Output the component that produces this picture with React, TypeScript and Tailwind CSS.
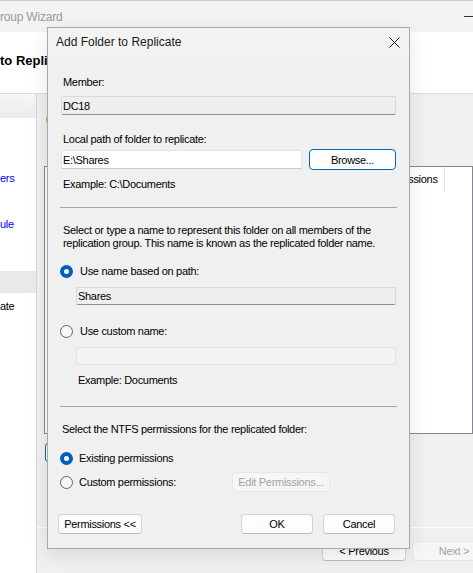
import type { ReactNode } from "react";

const Radio = ({ checked }: { checked?: boolean }) =>
  checked ? (
    <span className="flex h-[13px] w-[13px] shrink-0 items-center justify-center rounded-full bg-[#005fb8]">
      <span className="h-[5px] w-[5px] rounded-full bg-white" />
    </span>
  ) : (
    <span className="h-[13px] w-[13px] shrink-0 rounded-full border border-[#636363] bg-[#f7f7f7]" />
  );

const tones = {
  normal: "border-[#d3d3d3] border-b-[#bababa] bg-[#fdfdfd] text-black",
  focus: "border-[#0067c0] bg-[#fdfdfd] text-black",
  disabled: "border-[#e6e6e6] bg-[#f6f6f6] text-[#a3a3a3]",
};

const Button = ({
  children,
  className = "",
  tone = "normal",
}: {
  children: ReactNode;
  className?: string;
  tone?: keyof typeof tones;
}) => (
  <div className={`flex shrink-0 items-center justify-center rounded-[4px] border ${tones[tone]} ${className}`}>
    {children}
  </div>
);

const App = () => {
  return (
    <div className="relative h-[573px] w-[473px] overflow-hidden bg-[#f0f0f0] font-['Liberation_Sans',Arial,sans-serif] text-[11px] leading-[14px] tracking-[-0.3px] text-black">
      {/* Wizard window behind */}
      <div className="flex h-full flex-col">
        <div className="flex h-[32px] shrink-0 items-center justify-between border-t border-[#c8c8c8] bg-[#f3f3f3]">
          <span className="text-[12px] tracking-[-0.2px] text-[#9a9a9a]">roup Wizard</span>
          <span className="h-px w-[9px] bg-[#333]" />
        </div>

        <div className="flex h-[62px] shrink-0 items-center border-b border-[#dcdcdc] bg-white pb-[3px]">
          <span className="text-[13px] font-bold tracking-normal">to Replic</span>
        </div>

        <div className="flex min-h-0 flex-1">
          {/* Steps sidebar */}
          <div className="flex w-[37px] shrink-0 flex-col border-r border-[#d7d7d7] bg-white">
            <div className="h-[24px] bg-gradient-to-b from-[#f7f7f7] to-[#ebebeb]" />
            <div className="mt-[53px] h-[14px] whitespace-nowrap text-[#0000ff]">ers</div>
            <div className="mt-[32px] h-[14px] whitespace-nowrap text-[#0000ff]">ule</div>
            <div className="mt-[40px] h-[22px] bg-[#e9e9e9]" />
            <div className="mt-[6px] h-[14px] whitespace-nowrap">ate</div>
          </div>

          {/* Main area */}
          <div className="flex min-w-0 flex-1 flex-col pl-[7px]">
            <div className="ml-[2px] mt-[23px] h-[5px] w-[14px] shrink-0 bg-[#e6a23c]" />
            <div className="mt-[44px] h-[268px] shrink-0 border border-[#828790] bg-white">
              <div className="flex h-[24px] whitespace-nowrap">
                <div className="w-[333px] shrink-0 border-r border-[#e5e5e5]" />
                <div className="flex w-[67px] shrink-0 items-center border-r border-[#e5e5e5] pl-[3px]">
                  Permissions
                </div>
              </div>
            </div>
            <div className="-ml-[7px] h-[94px] shrink-0 border-b border-white pl-[8px]">
              <div className="mt-[9px] h-[19px] w-[80px] rounded-[3px] border border-[#0067c0] bg-[#fdfdfd]" />
            </div>
            <div className="mt-[13px] flex gap-[6px] pl-[278px]">
              <Button className="h-[20px] w-[84px]">&lt; Previous</Button>
              <Button className="h-[20px] w-[84px]" tone="disabled">
                Next &gt;
              </Button>
            </div>
          </div>
        </div>
      </div>

      {/* Add Folder dialog */}
      <div className="absolute left-[47px] top-[27px] flex h-[522px] w-[363px] flex-col border border-[#a9a9a9] bg-[#f0f0f0] shadow-[0_6px_18px_rgba(0,0,0,0.10)]">
        <div className="flex h-[28px] shrink-0 items-center justify-between bg-[#f3f3f3] pl-[8px] pr-[9px]">
          <span className="text-[12px] tracking-normal text-[#1a1a1a]">Add Folder to Replicate</span>
          <svg width="11" height="11" viewBox="0 0 11 11" fill="none" stroke="#1a1a1a" strokeWidth="1">
            <path d="M0.5 0.5 L10.5 10.5 M10.5 0.5 L0.5 10.5" />
          </svg>
        </div>

        <div className="flex flex-col px-[13px]">
          <div className="ml-[2px] mt-[19px] h-[14px]">Member:</div>
          <div className="mt-[7px] flex h-[19px] items-center rounded-[2px] border border-[#d9d9d9] border-b-[#8e8e8e] bg-[#efefef] pl-[1px]">
            DC18
          </div>

          <div className="ml-[2px] mt-[17px] h-[14px]">Local path of folder to replicate:</div>
          <div className="mt-[3px] flex h-[21px] items-center gap-[7px]">
            <div className="flex h-[19px] w-[242px] items-center rounded-[2px] border border-[#e4e4e4] border-b-[#c9c9c9] bg-white pl-[1px]">
              E:\Shares
            </div>
            <Button className="h-[21px] w-[87px]" tone="focus">
              Browse...
            </Button>
          </div>
          <div className="ml-[2px] mt-[7px] h-[14px]">Example: C:\Documents</div>

          <div className="-mx-px mt-[16px] h-px bg-[#a5a5a5]" />

          <div className="ml-[2px] mt-[16px] leading-[13px]">
            Select or type a name to represent this folder on all members of the
            <br />
            replication group. This name is known as the replicated folder name.
          </div>

          <div className="-ml-px mt-[14px] flex h-[14px] items-center gap-[7px]">
            <Radio checked />
            <span>Use name based on path:</span>
          </div>
          <div className="ml-[15px] mt-[9px] flex h-[18px] items-center rounded-[2px] border border-[#d9d9d9] border-b-[#8e8e8e] bg-[#efefef] pl-[1px]">
            Shares
          </div>

          <div className="-ml-px mt-[19px] flex h-[14px] items-center gap-[7px]">
            <Radio />
            <span>Use custom name:</span>
          </div>
          <div className="ml-[15px] mt-[9px] h-[18px] rounded-[2px] border border-[#e1e1e1] bg-[#f3f3f3]" />
          <div className="ml-[17px] mt-[8px] h-[14px]">Example: Documents</div>

          <div className="-mx-px mt-[19px] h-px bg-[#a5a5a5]" />

          <div className="ml-px mt-[15px] h-[14px]">Select the NTFS permissions for the replicated folder:</div>

          <div className="-ml-px mt-[15px] flex h-[14px] items-center gap-[6px]">
            <Radio checked />
            <span>Existing permissions</span>
          </div>
          <div className="-ml-px mt-[7px] flex h-[20px] items-center">
            <Radio />
            <span className="ml-[6px] w-[153px]">Custom permissions:</span>
            <Button className="h-[20px] w-[98px]" tone="disabled">
              Edit Permissions...
            </Button>
          </div>

          <div className="-ml-[3px] mt-[22px] flex items-center">
            <Button className="h-[20px] w-[84px]">Permissions &lt;&lt;</Button>
            <Button className="ml-[99px] h-[20px] w-[72px]">OK</Button>
            <Button className="ml-[10px] h-[20px] w-[72px]">Cancel</Button>
          </div>
        </div>
      </div>
    </div>
  );
};

export default App;
